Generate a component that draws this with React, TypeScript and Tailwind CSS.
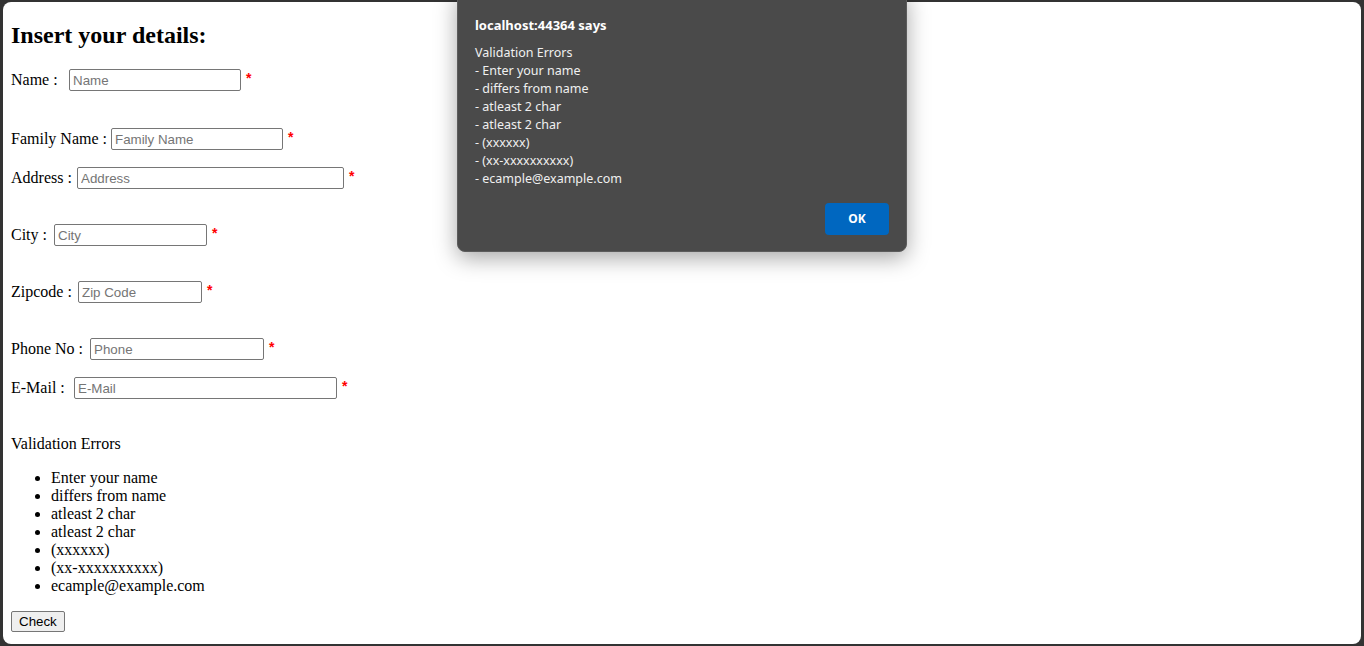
import React from "react";

const fields = [
  { label: "Name :", labelW: "w-[58px]", ph: "Name", inputW: "w-[172px]", mt: "mt-[19px]" },
  { label: "Family Name :", labelW: "w-[100px]", ph: "Family Name", inputW: "w-[172px]", mt: "mt-[37px]" },
  { label: "Address :", labelW: "w-[66px]", ph: "Address", inputW: "w-[267px]", mt: "mt-[17px]" },
  { label: "City :", labelW: "w-[43px]", ph: "City", inputW: "w-[153px]", mt: "mt-[35px]" },
  { label: "Zipcode :", labelW: "w-[67px]", ph: "Zip Code", inputW: "w-[124px]", mt: "mt-[35px]" },
  { label: "Phone No :", labelW: "w-[79px]", ph: "Phone", inputW: "w-[174px]", mt: "mt-[35px]" },
  { label: "E-Mail :", labelW: "w-[63px]", ph: "E-Mail", inputW: "w-[263px]", mt: "mt-[17px]" },
];

const errors = [
  "Enter your name",
  "differs from name",
  "atleast 2 char",
  "atleast 2 char",
  "(xxxxxx)",
  "(xx-xxxxxxxxxx)",
  "ecample@example.com",
];

export default function App() {
  return (
    <div className="relative h-[646px] w-[1364px] overflow-hidden bg-[#333333] pt-[2px] pr-[3px] pb-[2px] pl-[3px]">
      <div className="h-full rounded-lg bg-white pl-[8px] text-black font-['Liberation_Serif',serif] text-[16px]">
        <h2 className="pt-[19px] text-[24px] font-bold leading-[28px]">Insert your details:</h2>

        {fields.map((f, i) => (
          <div key={f.label} className={`${i === 0 ? "mt-[20px]" : f.mt} flex h-[22px] items-center`}>
            <span className={`${f.labelW} whitespace-nowrap`}>{f.label}</span>
            <input
              placeholder={f.ph}
              className={`${f.inputW} h-[22px] rounded-[2px] border border-[#767676] px-[3px] font-['Liberation_Sans',sans-serif] text-[13.33px] placeholder:text-[#757575] outline-none`}
            />
            <span className="ml-[5px] -mt-[5px] font-['Liberation_Sans',sans-serif] text-[14px] font-bold leading-none text-[#ff0000]">*</span>
          </div>
        ))}

        <p className="mt-[36px] leading-[18px]">Validation Errors</p>
        <ul className="mt-[16px] list-disc pl-10 leading-[18px]">
          {errors.map((e, i) => (
            <li key={i}>{e}</li>
          ))}
        </ul>
        <button className="mt-[16px] h-[21px] rounded-[2px] border border-[#767676] bg-[#efefef] px-[7px] font-['Liberation_Sans',sans-serif] text-[13.33px] leading-none">
          Check
        </button>
      </div>

      <div className="absolute left-[457px] top-[-10px] w-[450px] rounded-lg border border-[#5c5c5c] bg-[#4a4a4a] pl-[17px] pr-[17px] pt-[25px] pb-[16px] font-['Noto_Sans',sans-serif] text-white shadow-[0_6px_22px_rgba(0,0,0,0.35)]">
        <div className="text-[13px] font-bold leading-[18px]">localhost:44364 says</div>
        <div className="mt-[10px] text-[12.5px] leading-[18px] text-[#f0f0f0]">
          <div>Validation Errors</div>
          {errors.map((e, i) => (
            <div key={i}>- {e}</div>
          ))}
        </div>
        <div className="mt-[15px] flex justify-end">
          <button className="h-[32px] w-[64px] rounded-[4px] bg-[#0067c0] text-[12px] font-bold text-white">OK</button>
        </div>
      </div>
    </div>
  );
}
